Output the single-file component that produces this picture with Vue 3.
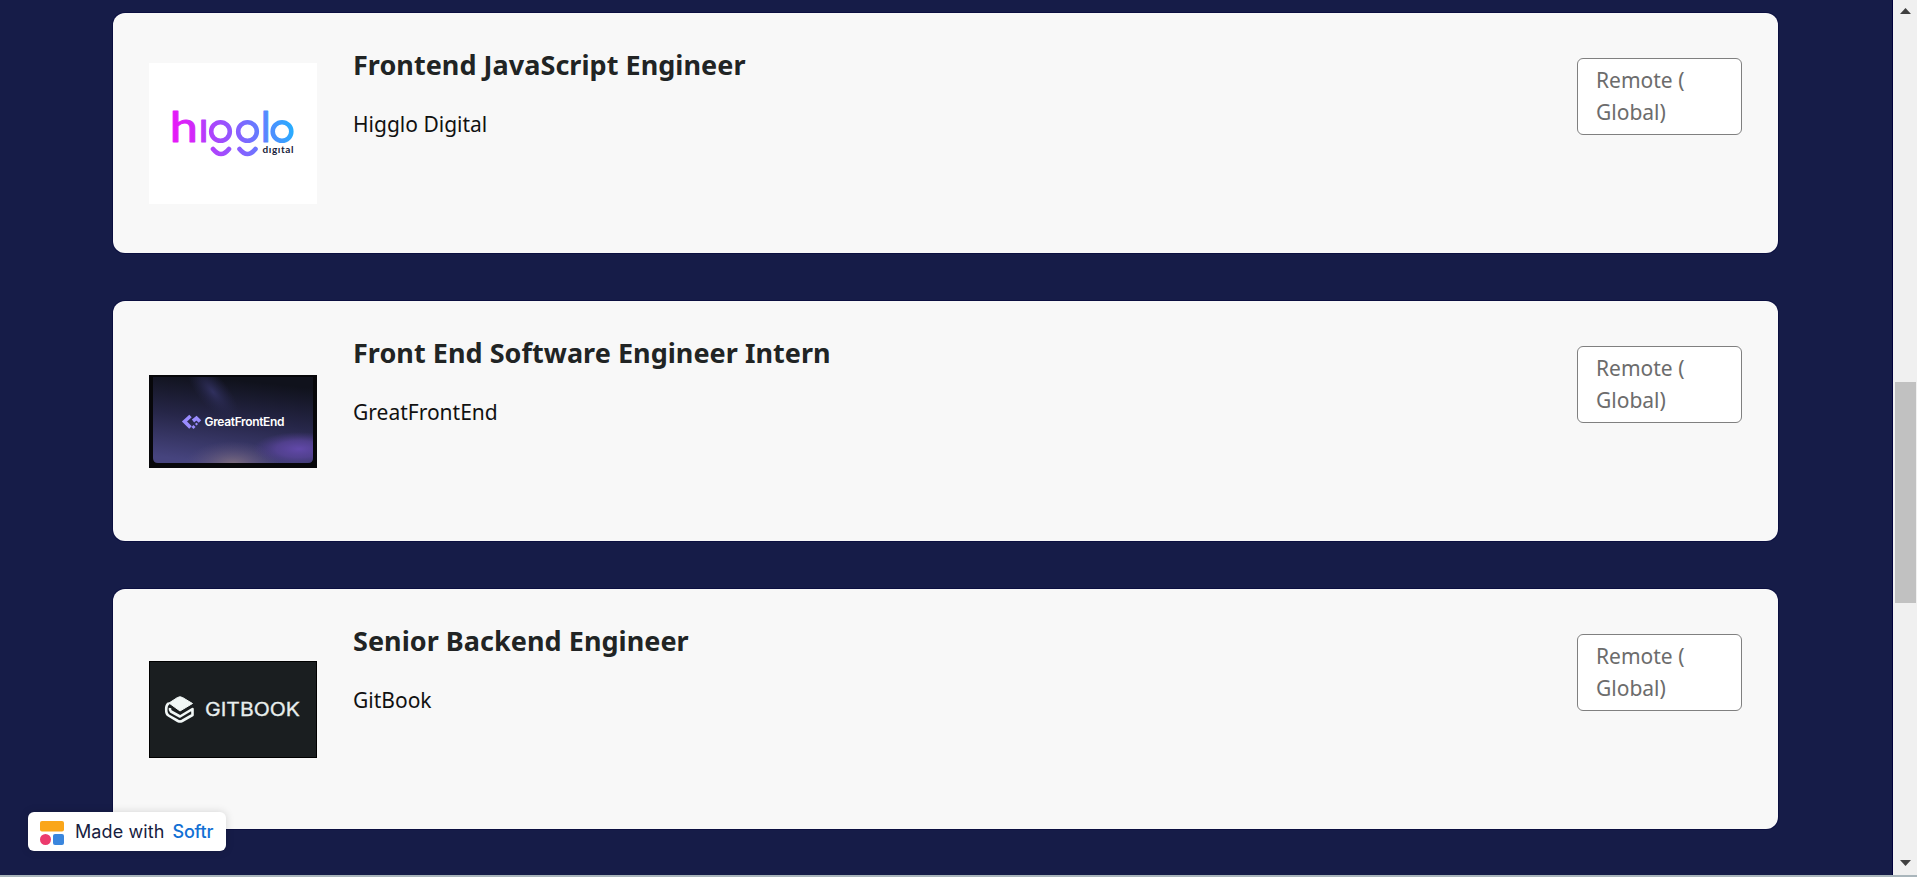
<template>
  <div class="page">
    <div class="viewport">
      <main class="job-list">
        <article v-for="job in jobs" :key="job.title" class="job-card">
          <div class="job-logo">
            <svg v-if="job.logo === 'higglo'" width="168" height="141" viewBox="0 0 168 141" role="img" aria-label="higglo digital">
              <defs>
                <linearGradient id="higglo-fill" gradientUnits="userSpaceOnUse" x1="24" y1="70" x2="145" y2="50">
                  <stop offset="0" stop-color="#e41bf8" />
                  <stop offset="0.5" stop-color="#8c5cff" />
                  <stop offset="1" stop-color="#22b2ff" />
                </linearGradient>
              </defs>
              <rect width="168" height="141" fill="#fff" />
              <g fill="url(#higglo-fill)" stroke="url(#higglo-fill)">
                <text class="higglo-word" transform="scale(1.2 1)" x="17.300" y="79.300">h</text>
                <text class="higglo-word" x="49.500" y="79.300">ı</text>
                <text class="higglo-word" x="111.800" y="79.300">l</text>
                <g class="higglo-face">
                  <circle cx="71.500" cy="68.500" r="9.300" />
                  <circle cx="98.500" cy="68.500" r="9.300" />
                  <circle cx="133" cy="68.500" r="9.300" />
                  <path d="M64 86q8 10 16 0M90.500 86q8 10 16 0" />
                </g>
              </g>
              <text class="higglo-sub" x="113.500" y="90" textLength="31">dıgıtal</text>
            </svg>

            <svg v-else-if="job.logo === 'greatfrontend'" width="168" height="93" viewBox="0 0 168 93" role="img" aria-label="GreatFrontEnd">
              <defs>
                <linearGradient id="gfe-sky" x1="0.6" y1="0" x2="0.4" y2="1">
                  <stop offset="0.05" stop-color="#10121c" />
                  <stop offset="0.5" stop-color="#262648" />
                  <stop offset="1" stop-color="#46447e" />
                </linearGradient>
                <radialGradient id="gfe-warm">
                  <stop offset="0" stop-color="#80707f" />
                  <stop offset="1" stop-color="#5a5078" stop-opacity="0" />
                </radialGradient>
                <radialGradient id="gfe-violet">
                  <stop offset="0" stop-color="#6249aa" />
                  <stop offset="0.5" stop-color="#5a449c" stop-opacity="0.75" />
                  <stop offset="1" stop-color="#4b3a88" stop-opacity="0" />
                </radialGradient>
                <radialGradient id="gfe-beam">
                  <stop offset="0" stop-color="#30305e" />
                  <stop offset="1" stop-color="#26264c" stop-opacity="0" />
                </radialGradient>
                <clipPath id="gfe-clip"><path d="M4 2H164V83Q164 88 159 88H9Q4 88 4 83Z" /></clipPath>
              </defs>
              <rect width="168" height="93" fill="#07070a" />
              <g clip-path="url(#gfe-clip)">
                <rect x="4" y="2" width="160" height="86" fill="url(#gfe-sky)" />
                <ellipse cx="64" cy="17" rx="36" ry="15" fill="url(#gfe-beam)" transform="rotate(50 64 17)" />
                <ellipse cx="84" cy="90" rx="48" ry="24" fill="url(#gfe-warm)" />
                <ellipse cx="150" cy="74" rx="46" ry="17" fill="url(#gfe-violet)" />
              </g>
              <path class="gfe-mark" d="M41.500 41L35.500 46.500L41.500 52.500M44 46L47.500 43.200L51 46.500" />
              <path class="gfe-dots" d="M44.500 50L46.500 52L44.500 54L42.500 52ZM47.500 47.500L49 49L47.500 50.500L46 49Z" />
              <text class="gfe-word" x="55.500" y="51" textLength="80">GreatFrontEnd</text>
            </svg>

            <svg v-else width="168" height="97" viewBox="0 0 168 97" role="img" aria-label="GitBook">
              <rect x="0.5" y="0.5" width="167" height="96" fill="#1a1e20" stroke="#000" />
              <path d="M20 42L28.500 36.500Q31 35 33.500 36.500L43.500 42.500L31 50Z" fill="#f1f7f6" stroke="#f1f7f6" stroke-linejoin="round" />
              <path class="gitbook-fold" d="M20 42Q17 44 17.200 48Q17 53 19.500 54.500L29 60Q31 61 33 60L43.500 54V48L31 55.500L22 50.500Q20.500 49 21 47" />
              <text class="gitbook-word" x="56" y="55" textLength="95" lengthAdjust="spacingAndGlyphs">GITBOOK</text>
            </svg>
          </div>

          <div class="job-info">
            <h3>{{ job.title }}</h3>
            <p>{{ job.company }}</p>
          </div>

          <span class="job-tag">Remote (<br />Global)</span>
        </article>
      </main>

      <div class="scrollbar">
        <svg width="11" height="6" viewBox="0 0 11 6"><path d="M0 6L5.500 0L11 6Z" /></svg>
        <div class="track">
          <div class="thumb"></div>
        </div>
        <svg width="11" height="6" viewBox="0 0 11 6"><path d="M0 0L5.500 6L11 0Z" /></svg>
      </div>
    </div>

    <a class="softr-badge">
      <svg width="24" height="24" viewBox="0 0 24 24">
        <rect width="24" height="10.500" rx="2" fill="#faa61a" />
        <circle cx="5.500" cy="18.500" r="5.500" fill="#ec3a6d" />
        <rect x="13" y="13" width="11" height="11" rx="2" fill="#3a86dd" />
      </svg>
      <span>Made with</span>
      <strong>Softr</strong>
    </a>
  </div>
</template>

<script setup>
const jobs = [
  { title: 'Frontend JavaScript Engineer', company: 'Higglo Digital', logo: 'higglo' },
  { title: 'Front End Software Engineer Intern', company: 'GreatFrontEnd', logo: 'greatfrontend' },
  { title: 'Senior Backend Engineer', company: 'GitBook', logo: 'gitbook' }
]
</script>

<style>
body { margin: 0; overflow: hidden; }
</style>

<style scoped>
.page { position: relative; height: 877px; box-sizing: border-box; border-bottom: 2px solid #a9b5bb; overflow: hidden; font-family: "Noto Sans", sans-serif; }
.viewport { display: flex; height: 100%; background-color: #161c48; }

.job-list { flex: 1; display: flex; flex-direction: column; gap: 48px; padding: 13px 114px 0 113px; border-right: 1px solid #00003c; }
.job-card { display: flex; flex: none; height: 240px; box-sizing: border-box; padding: 36px; background-color: #f8f8f8; border-radius: 12px; box-shadow: 0 0 0 1px #0b0f40; }
.job-logo { display: flex; align-items: center; width: 168px; margin-right: 36px; }
.job-logo svg { display: block; }
.job-info { flex: 1; }
.job-info h3 { margin: 0; font-size: 27px; line-height: 32px; font-weight: 700; color: #212424; letter-spacing: 0.04px; }
.job-info p { margin: 27px 0 0; font-size: 21px; line-height: 32px; color: #111; }
.job-tag { align-self: flex-start; width: 165px; height: 77px; box-sizing: border-box; margin-top: 9px; padding: 5px 18px; border: 1px solid #808080; border-radius: 6px; background-color: #fff; color: #6c6c6c; font-size: 21px; line-height: 32px; }

.higglo-word { font-family: Lato, sans-serif; font-size: 42px; stroke-width: 1; stroke-linejoin: round; }
.higglo-face { fill: none; stroke-width: 4.6; stroke-linecap: round; }
.higglo-sub { font-family: Lato, sans-serif; font-size: 10px; font-weight: 700; fill: #17213b; }
.gfe-mark { fill: none; stroke: #9a8cff; stroke-width: 3.6; }
.gfe-dots { fill: #9a8cff; }
.gfe-word { font-family: Inter, sans-serif; font-size: 12px; font-weight: 600; fill: #fff; }
.gitbook-fold { fill: none; stroke: #f1f7f6; stroke-width: 2.6; stroke-linejoin: round; }
.gitbook-word { font-family: Inter, sans-serif; font-size: 18.5px; font-weight: 400; fill: #e8eeed; stroke: #e8eeed; stroke-width: 0.3; }

.scrollbar { display: flex; flex-direction: column; align-items: center; justify-content: space-between; width: 24px; box-sizing: border-box; padding: 8px 0 9px; background-color: #f0f0f0; }
.scrollbar svg { display: block; fill: #404040; }
.track { flex: 1; width: 100%; box-sizing: border-box; padding: 368px 1px 0 2px; }
.thumb { height: 221px; background-color: #c1c1c1; }

.softr-badge { position: absolute; left: 28px; top: 812px; display: flex; align-items: center; width: 198px; height: 39px; box-sizing: border-box; padding: 2px 0 0 12px; background-color: #fff; border-radius: 6px; box-shadow: 0 0 8px rgba(0, 0, 0, 0.15); font-family: Inter, sans-serif; font-size: 18px; color: #17213f; }
.softr-badge span { margin-left: 11px; padding-bottom: 2px; letter-spacing: 0.1px; }
.softr-badge strong { margin-left: 8px; padding-bottom: 2px; font-weight: 500; color: #1270d4; letter-spacing: -0.2px; }
</style>
